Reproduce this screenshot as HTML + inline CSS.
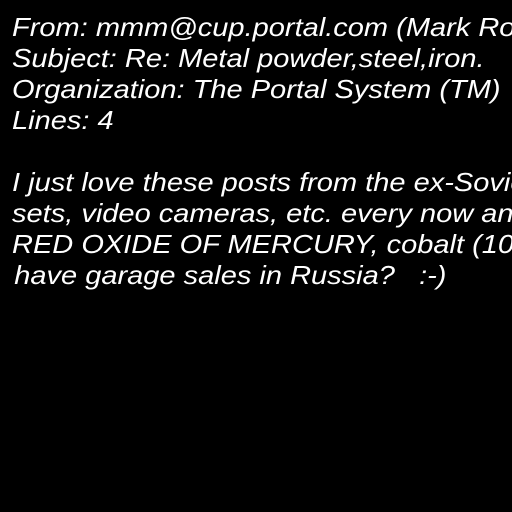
<!DOCTYPE html>
<html><head><style>
html,body{margin:0;padding:0;background:#000;width:512px;height:512px;overflow:hidden}
.t{position:absolute;left:12px;top:12px;color:#fff;font-family:"Liberation Sans",sans-serif;font-style:italic;font-size:26px;line-height:31px;white-space:pre;transform:scaleX(1.116);transform-origin:0 0}
</style></head><body>
<div class="t">From: mmm@cup.portal.com (Mark Robert Thorson)
Subject: Re: Metal powder,steel,iron.
Organization: The Portal System (TM)
Lines: 4

I just love these posts from the ex-Soviet Union.
sets, video cameras, etc. every now and then
RED OXIDE OF MERCURY, cobalt (10 tons)
<span style="margin-left:2px">have garage sales in Russia?   :-)</span></div>
</body></html>
